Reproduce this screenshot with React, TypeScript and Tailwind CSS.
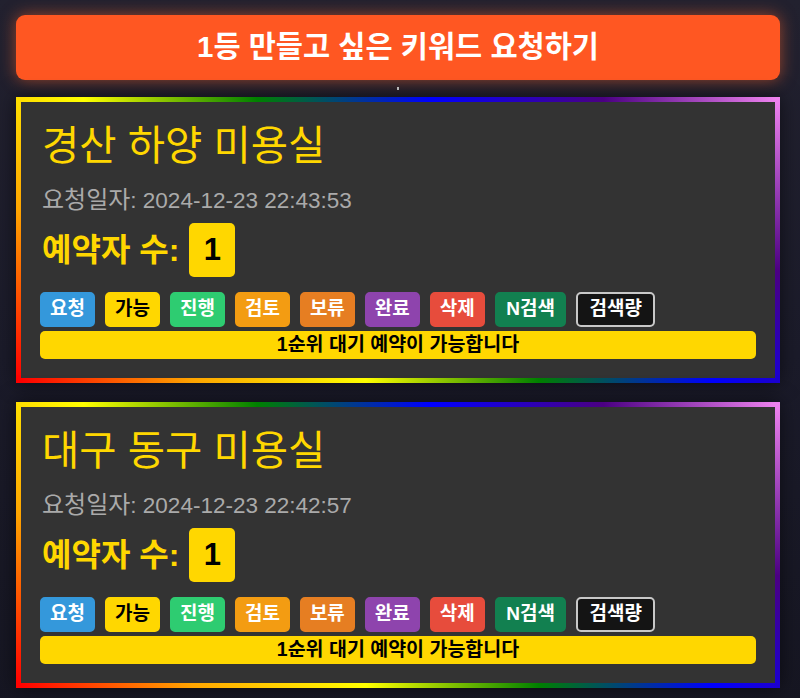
import React from "react";

const font = { fontFamily: '"Liberation Sans", "Noto Sans CJK KR", sans-serif' };

type Chip = { label: string; cls: string };

const chips: Chip[] = [
  { label: "요청", cls: "px-[8px] bg-[#3498db] border-[#3498db] text-white" },
  { label: "가능", cls: "px-[8px] bg-[#ffd700] border-[#ffd700] text-black" },
  { label: "진행", cls: "px-[8px] bg-[#2ecc71] border-[#2ecc71] text-white" },
  { label: "검토", cls: "px-[8px] bg-[#f39c12] border-[#f39c12] text-white" },
  { label: "보류", cls: "px-[8px] bg-[#e67e22] border-[#e67e22] text-white" },
  { label: "완료", cls: "px-[8px] bg-[#8e44ad] border-[#8e44ad] text-white" },
  { label: "삭제", cls: "px-[8px] bg-[#e74c3c] border-[#e74c3c] text-white" },
  { label: "N검색", cls: "px-[9.5px] bg-[#128050] border-[#128050] text-white" },
  { label: "검색량", cls: "px-[11px] bg-[#141414] border-[#c8c8c8] text-white" },
];

function Card({ name, date }: { name: string; date: string }) {
  return (
    <div className="bg-[#333333] border-[5px] border-solid [border-image:linear-gradient(45deg,red,orange,yellow,green,blue,indigo,violet)_1] shadow-[0_0_18px_rgba(0,0,0,0.55)] px-[19px] pt-[20px] pb-[19px]">
      <div className="text-[40.5px] leading-[48px] text-[#ffd700] pl-[2px]">{name}</div>
      <div className="mt-[15px] text-[22.5px] leading-[30px] text-[#aaaaaa] pl-[2px]">
        <span className="text-[24px]">요청일자</span>: {date}
      </div>
      <div className="mt-[7px] flex items-center gap-[10px] pl-[2px]">
        <span className="text-[32px] font-bold text-[#ffd700] leading-[38px]">예약자 수:</span>
        <span className="h-[54px] w-[46px] flex items-center justify-center rounded-[5px] bg-[#ffd700] text-black text-[31px] font-bold">1</span>
      </div>
      <div className="mt-[15px] flex flex-wrap gap-[10px]">
        {chips.map((c) => (
          <span
            key={c.label}
            className={`h-[35px] border-2 rounded-[5px] flex items-center justify-center text-[19px] font-bold ${c.cls}`}
          >
            {c.label}
          </span>
        ))}
      </div>
      <div className="mt-[4px] h-[28px] rounded-[5px] bg-[#ffd700] flex items-center justify-center text-[19.5px] font-bold text-black">
        1순위 대기 예약이 가능합니다
      </div>
    </div>
  );
}

export default function App() {
  return (
    <div style={font} className="min-h-[698px] bg-[linear-gradient(180deg,#22212f_0%,#1b1b2a_50%,#161622_100%)] pl-[16px] pr-[20px] pt-[15px] pb-[20px]">
      <div className="h-[65px] rounded-[9px] bg-[#ff5722] shadow-[0_0_16px_rgba(255,100,40,0.55)] flex items-center justify-center text-white text-[29.5px] font-bold">
        1등 만들고 싶은 키워드 요청하기
      </div>
      <div className="h-[17px] flex items-center justify-center">
        <div className="w-[2px] h-[3px] bg-[#cccccc]" />
      </div>
      <div className="flex flex-col gap-[19px]">
        <Card name="경산 하양 미용실" date="2024-12-23 22:43:53" />
        <Card name="대구 동구 미용실" date="2024-12-23 22:42:57" />
      </div>
    </div>
  );
}
